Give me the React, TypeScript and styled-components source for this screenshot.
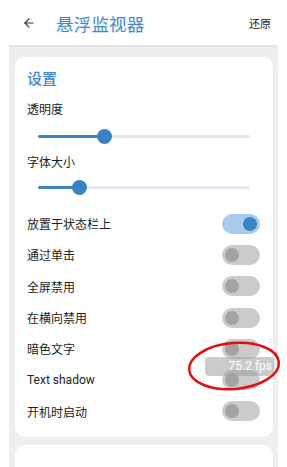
import React from "react";
import styled, { createGlobalStyle } from "styled-components";
import { ArrowLeft } from "lucide-react";

const GlobalStyle = createGlobalStyle`
  html, body {
    margin: 0;
    padding: 0;
    background: #ffffff;
    font-family: Roboto, "Noto Sans CJK SC", sans-serif;
    overflow: hidden;
  }
`;

const Page = styled.div`
  position: relative;
  width: 287px;
  height: 467px;
  overflow: hidden;
`;

// ヘッダー
const Header = styled.div`
  height: 45px;
  display: flex;
  align-items: center;
  padding: 1px 16px 0 22px;
  box-sizing: border-box;
  color: #333;
`;

const Title = styled.div`
  flex: 1;
  margin-left: 20px;
  font-size: 17.5px;
  color: #3d87cc;
  letter-spacing: 0.2px;
`;

const Restore = styled.div`
  font-size: 11px;
  color: #222;
`;

// 本体
const Body = styled.div`
  margin: 0 9px;
  height: 422px;
  background: #eeeeee;
  border-top: 2px solid #e3e3e3;
  padding: 10px 5px 0 6px;
  box-sizing: border-box;
`;

const Card = styled.div<{ $open?: boolean }>`
  background: #ffffff;
  border-radius: 10px;
  padding: ${(p) => (p.$open ? "0" : "12px 13px 10px 12px")};
  margin-bottom: 8px;
  height: ${(p) => (p.$open ? "40px" : "auto")};
`;

const Heading = styled.div`
  font-size: 15px;
  line-height: 20px;
  font-weight: 500;
  color: #3d87cc;
`;

const Label = styled.div<{ $gap: number }>`
  margin-top: ${(p) => p.$gap}px;
  font-size: 12px;
  line-height: 20px;
  color: #222;
`;

const SliderBox = styled.div<{ $gap: number }>`
  position: relative;
  margin: ${(p) => p.$gap}px 10px 0 11px;
  height: 26px;
  display: flex;
  align-items: center;
`;

const Track = styled.div`
  width: 100%;
  height: 3px;
  border-radius: 2px;
  background: #e9e3f0;
  overflow: hidden;
`;

const Active = styled.div`
  height: 100%;
  background: #3b82c4;
`;

const Thumb = styled.div`
  position: absolute;
  top: 50%;
  width: 15px;
  height: 15px;
  margin: -7.5px 0 0 -7.5px;
  border-radius: 50%;
  background: #3b82c4;
`;

const ToggleList = styled.div`
  margin-top: 8px;
`;

const Row = styled.div`
  height: 31.3px;
  display: flex;
  align-items: center;
  justify-content: space-between;
  font-size: 12px;
  color: #222;
`;

const Switch = styled.div<{ $on?: boolean }>`
  width: 38px;
  height: 20px;
  border-radius: 10px;
  background: ${(p) => (p.$on ? "#a9cbec" : "#cbcbcb")};
  display: flex;
  align-items: center;
  justify-content: ${(p) => (p.$on ? "flex-end" : "flex-start")};
  padding: 0 3px;
  box-sizing: border-box;
`;

const Knob = styled.div<{ $on?: boolean }>`
  width: 14px;
  height: 14px;
  border-radius: 50%;
  background: ${(p) => (p.$on ? "#3b82c4" : "#a3a3a3")};
`;

// 浮动窗口
const FpsBadge = styled.div`
  position: absolute;
  left: 205px;
  top: 357px;
  width: 69px;
  height: 19px;
  border-radius: 4px;
  background: rgba(160, 160, 160, 0.55);
  color: #ffffff;
  font-size: 12px;
  line-height: 19px;
  text-align: right;
  padding-right: 2px;
  box-sizing: border-box;
`;

const Mark = styled.svg`
  position: absolute;
  left: 185px;
  top: 337px;
`;

const Slider = ({ value, gap }: { value: number; gap: number }) => (
  <SliderBox $gap={gap}>
    <Track>
      <Active style={{ width: `${value}%` }} />
    </Track>
    <Thumb style={{ left: `${value}%` }} />
  </SliderBox>
);

const toggles: [string, boolean][] = [
  ["放置于状态栏上", true],
  ["通过单击", false],
  ["全屏禁用", false],
  ["在横向禁用", false],
  ["暗色文字", false],
  ["Text shadow", false],
  ["开机时启动", false],
];

export default function App() {
  return (
    <Page>
      <GlobalStyle />
      <Header>
        <ArrowLeft size={14} strokeWidth={2} color="#333" />
        <Title>悬浮监视器</Title>
        <Restore>还原</Restore>
      </Header>
      <Body>
        <Card>
          <Heading>设置</Heading>
          <Label $gap={11}>透明度</Label>
          <Slider value={31.6} gap={3} />
          <Label $gap={4}>字体大小</Label>
          <Slider value={19.8} gap={1} />
          <ToggleList>
            {toggles.map(([name, on]) => (
              <Row key={name}>
                <span>{name}</span>
                <Switch $on={on}>
                  <Knob $on={on} />
                </Switch>
              </Row>
            ))}
          </ToggleList>
        </Card>
        <Card $open />
      </Body>
      <FpsBadge>75.2 fps</FpsBadge>
      <Mark width="100" height="58" viewBox="0 0 100 58">
        <ellipse
          cx="49"
          cy="29"
          rx="45"
          ry="23"
          fill="none"
          stroke="#e01010"
          strokeWidth="2.5"
          transform="rotate(-5 49 29)"
        />
      </Mark>
    </Page>
  );
}
